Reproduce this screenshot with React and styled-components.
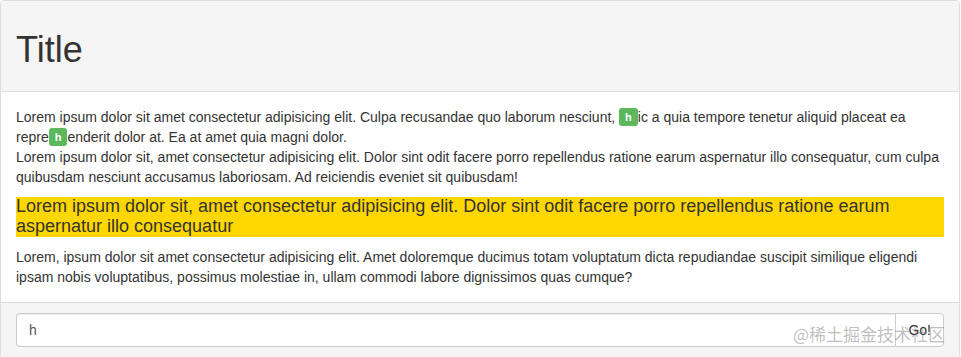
import React from 'react';
import styled, { createGlobalStyle } from 'styled-components';

const GlobalStyle = createGlobalStyle`
  * { box-sizing: border-box; }
  body {
    margin: 0;
    font-family: "Liberation Sans", Arial, sans-serif;
    font-size: 14px;
    line-height: 20px;
    color: #333;
    background: #fff;
  }
`;

const Panel = styled.div`
  position: relative;
  width: 960px;
  border: 1px solid #ddd;
  border-radius: 4px;
  overflow: hidden;
`;

const Heading = styled.div`
  background: #f5f5f5;
  border-bottom: 1px solid #ddd;
  padding: 29px 15px 21px;
`;

const Title = styled.h1`
  margin: 0;
  font-size: 36px;
  line-height: 40px;
  font-weight: 500;
`;

const Body = styled.div`
  padding: 15px;
`;

const Text = styled.div`
  margin: 0;
`;

const Mark = styled.span`
  display: inline;
  padding: 3px 6px 3px;
  font-size: 11px;
  font-weight: 700;
  line-height: 1;
  color: #fff;
  background: #5cb85c;
  border-radius: 3px;
  vertical-align: 1px;
`;

const Highlight = styled.h4`
  margin: 10px 0;
  font-size: 18px;
  line-height: 1.1;
  font-weight: 500;
  background: #ffd700;
`;

const Footer = styled.div`
  background: #f5f5f5;
  border-top: 1px solid #ddd;
  padding: 10px 15px;
`;

const InputGroup = styled.div`
  display: flex;
`;

const Input = styled.input`
  flex: 1;
  height: 34px;
  padding: 6px 12px;
  font-family: inherit;
  font-size: 14px;
  color: #555;
  background: #fff;
  border: 1px solid #ccc;
  border-right: none;
  border-radius: 4px 0 0 4px;
  box-shadow: inset 0 1px 1px rgba(0, 0, 0, 0.075);
  outline: none;
`;

const Button = styled.button`
  height: 34px;
  padding: 6px 12px;
  font-family: inherit;
  font-size: 14px;
  color: #333;
  background: #fff;
  border: 1px solid #ccc;
  border-radius: 0 4px 4px 0;
`;

const Watermark = styled.div`
  position: absolute;
  right: 14px;
  bottom: 13px;
  font-family: "Noto Sans CJK SC", sans-serif;
  font-size: 17px;
  line-height: 20px;
  color: rgba(110, 110, 110, 0.45);
  pointer-events: none;
`;

const App = () => {
  return (
    <>
      <GlobalStyle />
      <Panel>
        <Heading>
          <Title>Title</Title>
        </Heading>
        <Body>
          <Text>
            Lorem ipsum dolor sit amet consectetur adipisicing elit. Culpa recusandae quo laborum nesciunt, <Mark>h</Mark>ic a quia tempore tenetur aliquid placeat ea repre<Mark>h</Mark>enderit dolor at. Ea at amet quia magni dolor.
            <br />
            Lorem ipsum dolor sit, amet consectetur adipisicing elit. Dolor sint odit facere porro repellendus ratione earum aspernatur illo consequatur, cum culpa quibusdam nesciunt accusamus laboriosam. Ad reiciendis eveniet sit quibusdam!
          </Text>
          <Highlight>
            Lorem ipsum dolor sit, amet consectetur adipisicing elit. Dolor sint odit facere porro repellendus ratione earum aspernatur illo consequatur
          </Highlight>
          <Text>
            Lorem, ipsum dolor sit amet consectetur adipisicing elit. Amet doloremque ducimus totam voluptatum dicta repudiandae suscipit similique eligendi ipsam nobis voluptatibus, possimus molestiae in, ullam commodi labore dignissimos quas cumque?
          </Text>
        </Body>
        <Footer>
          <InputGroup>
            <Input defaultValue="h" />
            <Button>Go!</Button>
          </InputGroup>
        </Footer>
        <Watermark>@稀土掘金技术社区</Watermark>
      </Panel>
    </>
  );
};

export default App;
